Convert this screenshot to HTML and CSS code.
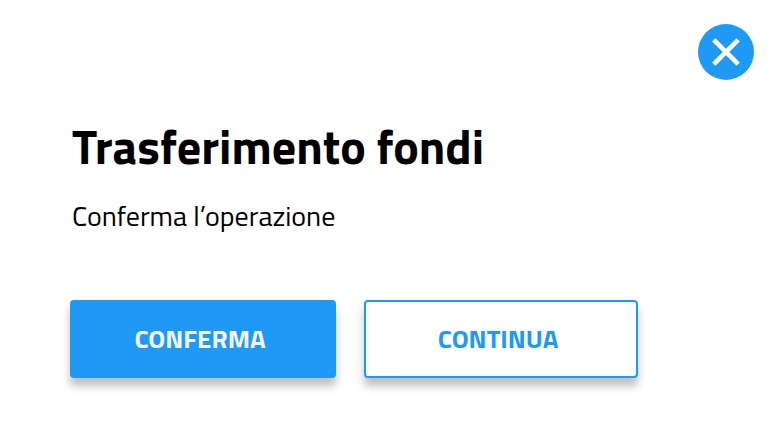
FILE: index.html
```html
<!DOCTYPE html>
<html lang="it">
<head>
    <meta charset="UTF-8">
    <meta name="viewport" content="width=device-width, initial-scale=1.0">
    <title>Trasferimento fondi</title>
    <link rel="stylesheet" href="styles.css">
</head>
<body>
    <div class="dialog">
        <div class="top">
            <button class="close" aria-label="Chiudi">
                <svg width="28" height="28" viewBox="0 0 28 28">
                    <path fill="none" stroke="#fff" stroke-width="4.6" d="M1.8 1.8L26.2 26.2M26.2 1.8L1.8 26.2"/>
                </svg>
            </button>
        </div>
        <div class="content">
            <h1 class="title">Trasferimento fondi</h1>
            <p class="text">Conferma l’operazione</p>
            <div class="actions">
                <button class="btn confirm">CONFERMA</button>
                <button class="btn continue">CONTINUA</button>
            </div>
        </div>
    </div>
</body>
</html>
```

FILE: styles.css
```css
* {
    box-sizing: border-box;
}

body {
    font-family: 'Titillium Web', Roboto, sans-serif;
    margin: 0;
    background-color: #fff;
    color: #000;
}

.dialog {
    height: 442px;
    overflow: hidden;
}

.top {
    display: flex;
    justify-content: flex-end;
    padding: 24px 28px 0 0;
}

.close {
    display: flex;
    justify-content: center;
    align-items: center;
    width: 56px;
    height: 56px;
    padding: 0;
    border: none;
    border-radius: 50%;
    background-color: #1e9af5;
    cursor: pointer;
}

.content {
    padding: 31px 70px 0;
}

.title {
    margin: 0 0 0 2px;
    font-size: 48px;
    font-weight: 700;
    line-height: 72px;
    white-space: nowrap;
}

.text {
    margin: 12px 0 0 2px;
    font-size: 28px;
    font-weight: 400;
    line-height: 42px;
    white-space: nowrap;
}

.actions {
    display: flex;
    gap: 28px;
    margin-top: 63px;
}

.btn {
    height: 78px;
    padding: 0 6px 2px 0;
    border: 2px solid #1e9af5;
    border-radius: 4px;
    box-shadow: 0 8px 8px rgba(0, 0, 0, 0.25);
    font-family: inherit;
    font-size: 26px;
    font-weight: 700;
    white-space: nowrap;
    cursor: pointer;
}

.confirm {
    width: 266px;
    background-color: #1e9af5;
    color: #f5f5f5;
}

.continue {
    width: 274px;
    background-color: #fff;
    color: #1e9af5;
}
```
